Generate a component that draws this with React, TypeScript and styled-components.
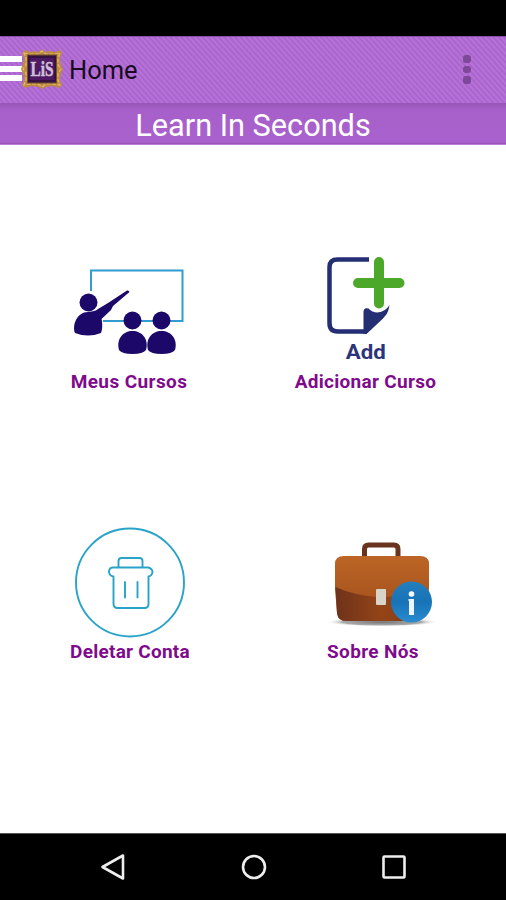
import React from "react";
import styled, { createGlobalStyle } from "styled-components";

const GlobalStyle = createGlobalStyle`
  * { box-sizing: border-box; }
  body { margin: 0; background: #fff; font-family: Roboto, "Liberation Sans", sans-serif; }
`;

const Screen = styled.div`
  width: 506px;
  height: 900px;
  display: flex;
  flex-direction: column;
  overflow: hidden;
  background: #fff;
`;

const StatusBar = styled.div`
  height: 36px;
  flex: none;
  background: #000;
`;

const AppBar = styled.header`
  height: 67px;
  flex: none;
  display: flex;
  align-items: center;
  border-top: 1px solid #8b51a9;
  background: repeating-linear-gradient(48deg, #b571d8 0 1.4px, #a965cb 2.2px 3.2px, #b571d8 4px);
`;

const Drawer = styled.div`
  width: 22px;
  height: 25px;
  display: flex;
  flex-direction: column;
  justify-content: space-between;
  margin-top: -3px;
`;

const DrawerLine = styled.span`
  height: 6px;
  background: #fff;
`;

const Logo = styled.svg`
  width: 42px;
  height: 40px;
  flex: none;
  margin: -2px 0 0 -1px;
`;

const PageName = styled.h1`
  margin: 0 0 0 6px;
  flex: 1;
  font-size: 25.5px;
  line-height: 32px;
  font-weight: 400;
  color: #180c20;
`;

const Overflow = styled.div`
  width: 8px;
  margin: -1px 35px 0 0;
  display: flex;
  flex-direction: column;
  gap: 3px;
`;

const Dot = styled.span`
  width: 7.5px;
  height: 7.5px;
  border-radius: 3px;
  background: #7c4897;
`;

const Banner = styled.div`
  height: 42px;
  flex: none;
  background: linear-gradient(#9857b8, #a760ca 7px, #a962cd 39px, #9550b5);
  color: #fff;
  font-size: 30.7px;
  line-height: 45px;
  text-align: center;
  border-bottom: 1px solid #b87dd5;
`;

const Menu = styled.main`
  flex: 1;
  display: grid;
  grid-template-columns: 258px 215px;
  grid-template-rows: 270px 1fr;
  padding-top: 112px;
`;

const Tile = styled.button<{ $shift?: number }>`
  border: 0;
  padding: 0 0 0 ${(p) => p.$shift ?? 0}px;
  background: none;
  font-family: inherit;
  display: flex;
  flex-direction: column;
  align-items: center;
  justify-content: flex-start;
`;

const Picture = styled.svg`
  width: 130px;
  height: 113px;
  flex: none;
`;

const Label = styled.span<{ $spacing: number }>`
  font-size: 19px;
  line-height: 23px;
  font-weight: 700;
  letter-spacing: ${(p) => p.$spacing}px;
  color: #800a8c;
  white-space: nowrap;
`;

const NavBar = styled.nav`
  height: 67px;
  flex: none;
  display: flex;
  justify-content: space-between;
  align-items: center;
  padding: 0 98px 0 99px;
  border-top: 1px solid #555;
  background: #000;
`;

const NavIcon = styled.svg`
  width: 28px;
  height: 28px;
  fill: none;
  stroke: #eee;
  stroke-width: 2.6;
  stroke-linejoin: round;
`;

const FrameLogo = () => (
  <Logo viewBox="0 0 42 40">
    <path
      d="M1 4 4 1 9 3 15 2 18 3 21 0 24 3 29 2 34 3 39 1 41 4 39 9 40 15 42 20 40 25 39 31 41 36 38 39 32 37 25 38 21 40 18 38 10 37 4 39 1 36 3 30 2 25 0 20 2 15 3 9Z"
      fill="#bd8a45"
    />
    <path d="M3 4 8 5H17L21 2 25 5H34L39 4 37 9V16L40 20 37 24V31L39 36 32 35H25L21 38 17 35H8L3 36 5 31V24L2 20 5 16V9Z" fill="none" stroke="#e5b960" strokeWidth="1.2" strokeDasharray="4 1.5" />
    <rect x="6.500" y="6" width="29" height="28" fill="#341342" stroke="#76502f" />
    <rect x="9" y="9" width="24" height="22" fill="#4e1963" />
    <text x="21" y="27" textAnchor="middle" textLength="23" lengthAdjust="spacingAndGlyphs" fontFamily="Liberation Serif, serif" fontWeight="700" fontSize="22" fill="#cfc0d8" stroke="#cfc0d8" strokeWidth=".5">LiS</text>
  </Logo>
);

const ClassPicture = () => (
  <Picture viewBox="64 257 130 113">
    <path d="M91 291V270.500H182.500V321H103" fill="none" stroke="#329bd0" strokeWidth="2" />
    <g fill="#1b0868">
      <circle cx="88.500" cy="302.500" r="9" />
      <path d="M88 312C93 311 96 311 98 309L108 303 127 290.500Q129 290 129.500 292L113 306 111 310 101.500 319C103 325 102 331 101 333Q88 338 75 333C72 325 77 312 88 312Z" />
      <circle cx="132.500" cy="320.500" r="9" />
      <circle cx="161.500" cy="320.500" r="9" />
      <path d="M119 350C116 339 123 331 132.500 331S149 339 146 350Q143 354 132.500 354 122 354 119 350Z" />
      <path d="M148 350C145 339 152 331 161.500 331S178 339 175 350Q172 354 161.500 354 151 354 148 350Z" />
    </g>
  </Picture>
);

const AddPicture = () => (
  <Picture viewBox="300.500 257 130 113">
    <path d="M368.500 259.500H337Q329 259.500 329 267V323Q329 331.500 337 331.500H366" fill="none" stroke="#242e72" strokeWidth="4.500" />
    <path d="M363 334V312Q363 307 368 308.500C374 315 384 313 389 305 388 312 386 315 382 319L366 334Z" fill="#242e72" />
    <path d="M378.500 262V303.500M357.500 283H399" stroke="#4ca829" strokeWidth="10" strokeLinecap="round" />
    <text x="365.200" y="358.500" textAnchor="middle" textLength="40" lengthAdjust="spacingAndGlyphs" fontFamily="Roboto, sans-serif" fontWeight="700" fontSize="20" fill="#2c347a">Add</text>
  </Picture>
);

const TrashPicture = () => (
  <Picture viewBox="65.500 527 130 113" fill="none" stroke="#29a3c7" strokeWidth="1.900" strokeLinecap="round">
    <circle cx="130.500" cy="582.500" r="54" />
    <path d="M119 567V561Q119 558 122 558H140Q143 558 143 561V567M113 567.500H149Q153 569 153 572 152.500 576 149 576.500V604Q149 608 145 608H118Q114 608 114 604V576.500Q110 576 109.500 572 109.500 568 113 567.500ZM125.500 582V597.500M138 582V597.500" />
  </Picture>
);

const BriefcasePicture = () => (
  <Picture viewBox="308 527 130 113">
    <defs>
      <linearGradient id="leather" x1="0" y1="0" x2="0" y2="1">
        <stop stopColor="#bc6526" />
        <stop offset="1" stopColor="#9e4c1a" />
      </linearGradient>
      <linearGradient id="pocket">
        <stop stopColor="#6e321b" />
        <stop offset=".5" stopColor="#944517" />
        <stop offset="1" stopColor="#7b3a1b" />
      </linearGradient>
      <linearGradient id="badge" x1="0" y1="0" x2="0" y2="1">
        <stop stopColor="#247fbd" />
        <stop offset=".5" stopColor="#1873b7" />
        <stop offset="1" stopColor="#298cd2" />
      </linearGradient>
      <radialGradient id="shadow">
        <stop stopColor="#777" />
        <stop offset=".7" stopColor="#aaa" />
        <stop offset="1" stopColor="#fff" stopOpacity="0" />
      </radialGradient>
    </defs>
    <ellipse cx="382" cy="622" rx="56" ry="4.500" fill="url(#shadow)" />
    <path d="M364.500 557V549Q364.500 545 368.500 545H394Q398 545 398 549V557" fill="none" stroke="#68331f" strokeWidth="5" />
    <path d="M335 589V564Q335 556 344 556H420Q429 556 429 564V589L425 614Q423 621 416 621H346Q338 621 337 613Z" fill="url(#leather)" />
    <path d="M335.500 587Q353 595 377 597H388L428 590 425 614Q423 621 416 621H346Q338 621 337 613Z" fill="url(#pocket)" />
    <rect x="376" y="589" width="10" height="16" rx="1" fill="#d9d4c8" />
    <circle cx="411.500" cy="602" r="20.500" fill="url(#badge)" />
    <circle cx="411.500" cy="594" r="2.800" fill="#fff" />
    <path d="M408.500 599H414V615H409V601H408.500Z" fill="#edf6fc" />
  </Picture>
);

export default function App() {
  return (
    <>
      <GlobalStyle />
      <Screen>
        <StatusBar />
        <AppBar>
          <Drawer>
            <DrawerLine />
            <DrawerLine />
            <DrawerLine />
          </Drawer>
          <FrameLogo />
          <PageName>Home</PageName>
          <Overflow>
            <Dot />
            <Dot />
            <Dot />
          </Overflow>
        </AppBar>
        <Banner>Learn In Seconds</Banner>
        <Menu>
          <Tile>
            <ClassPicture />
            <Label $spacing={0.4}>Meus Cursos</Label>
          </Tile>
          <Tile>
            <AddPicture />
            <Label $spacing={0.3}>Adicionar Curso</Label>
          </Tile>
          <Tile $shift={2}>
            <TrashPicture />
            <Label $spacing={0.25}>Deletar Conta</Label>
          </Tile>
          <Tile $shift={15}>
            <BriefcasePicture />
            <Label $spacing={0.35}>Sobre Nós</Label>
          </Tile>
        </Menu>
        <NavBar>
          <NavIcon viewBox="0 0 28 28">
            <path d="M3.500 14 24 2.500V25.500Z" />
          </NavIcon>
          <NavIcon viewBox="0 0 28 28">
            <circle cx="14" cy="14" r="11" />
          </NavIcon>
          <NavIcon viewBox="0 0 28 28">
            <rect x="3.500" y="3.500" width="21" height="21" rx="1" />
          </NavIcon>
        </NavBar>
      </Screen>
    </>
  );
}
